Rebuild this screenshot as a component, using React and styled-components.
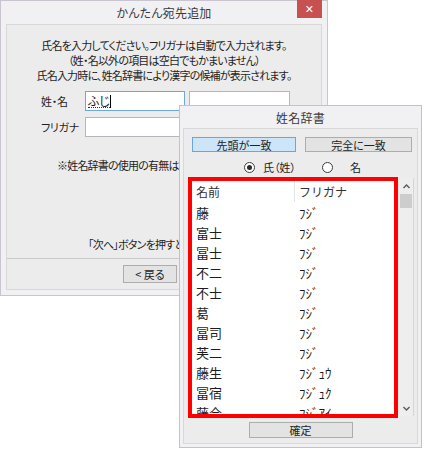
import React from "react";
import styled, { createGlobalStyle } from "styled-components";

const GlobalStyle = createGlobalStyle`
  html, body {
    margin: 0;
    padding: 0;
    background: #ffffff;
  }
  body {
    font-family: "Noto Sans CJK JP", "Noto Sans", sans-serif;
    font-feature-settings: "palt";
    color: #1e1e1e;
  }
`;

const Desktop = styled.div`
  position: relative;
  width: 425px;
  height: 451px;
  overflow: hidden;
  background: #ffffff;
`;

const Window = styled.div`
  position: absolute;
  left: ${(p) => p.$x}px;
  top: ${(p) => p.$y}px;
  width: ${(p) => p.$w}px;
  height: ${(p) => p.$h}px;
  box-sizing: border-box;
  display: flex;
  flex-direction: column;
  padding: 0 ${(p) => p.$pad}px ${(p) => p.$pad}px;
  background: #f1f0f3;
  border: 1px solid ${(p) => p.$border || "#c9c4cf"};
`;

const TitleBar = styled.div`
  position: relative;
  height: ${(p) => p.$h}px;
  flex-shrink: 0;
  display: flex;
  align-items: center;
  justify-content: center;
  font-size: 12px;
  color: #3a3a3a;
  letter-spacing: 0.2px;
`;

const CloseButton = styled.div`
  position: absolute;
  top: -1px;
  right: 0;
  width: 25px;
  height: 18px;
  background: #c75050;
  color: #ffffff;
  font-family: "DejaVu Sans", sans-serif;
  font-size: 11px;
  font-weight: bold;
  display: flex;
  align-items: center;
  justify-content: center;
`;

const Panel = styled.div`
  flex: 1;
  display: flex;
  flex-direction: column;
  background: #ececec;
  border: 1px solid #d8d8d8;
  font-size: 11px;
  min-height: 0;
`;

const Intro = styled.div`
  padding-top: 13px;
  text-align: center;
  line-height: 15px;
  letter-spacing: -0.8px;
`;

const FormRow = styled.div`
  display: flex;
  align-items: center;
  gap: 4px;
  padding-left: 34px;
  margin-top: ${(p) => p.$mt}px;
`;

const Label = styled.div`
  width: 40px;
  letter-spacing: -0.3px;
`;

const Field = styled.div`
  box-sizing: border-box;
  width: ${(p) => p.$w}px;
  height: 20px;
  background: #ffffff;
  border: 1px solid ${(p) => (p.$focus ? "#6fa7e0" : "#b4b6bc")};
  display: flex;
  align-items: center;
  padding-left: 2px;
  font-size: 12px;
`;

const Composing = styled.span`
  border-bottom: 1px dotted #333;
  line-height: 13px;
`;

const Caret = styled.span`
  display: inline-block;
  width: 1px;
  height: 13px;
  background: #000;
`;

const Note = styled.div`
  margin-top: ${(p) => p.$mt}px;
  padding-left: ${(p) => p.$pl}px;
  line-height: 15px;
  white-space: nowrap;
  letter-spacing: -0.8px;
`;

const Spacer = styled.div`
  flex: 1;
`;

const Footer = styled.div`
  border-top: 1px solid #c9c9c9;
  padding: 6px 0 6px 116px;
  margin-top: 6px;
`;

const Button = styled.div`
  box-sizing: border-box;
  width: ${(p) => p.$w}px;
  height: ${(p) => p.$h}px;
  display: flex;
  align-items: center;
  justify-content: center;
  font-size: 11px;
  color: #222;
  background: ${(p) => (p.$pressed ? "#cde5f8" : "#e3e3e3")};
  border: 1px solid ${(p) => (p.$pressed ? "#6aa6dd" : "#adadad")};
`;

const DictPanel = styled(Panel)`
  padding: 8px 0 7px 4px;
  align-items: stretch;
`;

const ButtonRow = styled.div`
  display: flex;
  gap: 9px;
  padding-left: 4px;
`;

const RadioRow = styled.div`
  display: flex;
  align-items: center;
  height: 16px;
  margin-top: 7px;
  padding-left: 56px;
  font-size: 11px;
`;

const Radio = styled.span`
  box-sizing: border-box;
  width: 11px;
  height: 11px;
  border-radius: 50%;
  border: 1px solid #3c3c3c;
  background: #fff;
  display: inline-flex;
  align-items: center;
  justify-content: center;
  margin-right: ${(p) => p.$mr}px;
  &::after {
    content: "";
    width: 5px;
    height: 5px;
    border-radius: 50%;
    background: ${(p) => (p.$on ? "#2a2a2a" : "transparent")};
  }
`;

const RadioText = styled.span`
  margin-right: ${(p) => p.$mr || 0}px;
`;

const ListArea = styled.div`
  display: flex;
  margin-top: 2px;
  height: 241px;
`;

const Highlight = styled.div`
  box-sizing: border-box;
  width: 210px;
  height: 241px;
  border: 4px solid #ff0000;
  background: #ffffff;
  overflow: hidden;
`;

const ListRow = styled.div`
  display: flex;
  height: ${(p) => (p.$head ? 21 : 20)}px;
  align-items: center;
  font-size: ${(p) => (p.$head ? 12 : 13)}px;
  color: ${(p) => (p.$head ? "#333" : "#1c1c1c")};
`;

const NameCell = styled.div`
  width: 103px;
  box-sizing: border-box;
  padding-left: 4px;
  align-self: stretch;
  display: flex;
  align-items: center;
  border-right: 1px solid ${(p) => (p.$head ? "#e3e3e3" : "transparent")};
`;

const KanaCell = styled.div`
  padding-left: 4px;
  font-size: ${(p) => (p.$head ? 12 : 13)}px;
  font-feature-settings: normal;
`;

const ScrollBar = styled.div`
  box-sizing: border-box;
  width: 15px;
  margin: 1px 0 2px 1px;
  background: #eeeeee;
  border-right: 1px solid #d6d6d6;
  display: flex;
  flex-direction: column;
  align-items: center;
`;

const Arrow = styled.div`
  height: 16px;
  width: 100%;
  display: flex;
  align-items: center;
  justify-content: center;
  color: #5a5a5a;
`;

const Thumb = styled.div`
  width: 12px;
  height: 14px;
  background: #cdcdcd;
`;

const ConfirmRow = styled.div`
  display: flex;
  justify-content: center;
  margin-top: 4px;
  padding-right: 4px;
`;

const Chevron = ({ up }) => (
  <svg width="7" height="5" viewBox="0 0 7 5">
    <path
      d={up ? "M0.5 4 L3.5 1 L6.5 4" : "M0.5 1 L3.5 4 L6.5 1"}
      fill="none"
      stroke="currentColor"
      strokeWidth="1.4"
    />
  </svg>
);

const entries = [
  ["藤", "ﾌｼﾞ"],
  ["富士", "ﾌｼﾞ"],
  ["冨士", "ﾌｼﾞ"],
  ["不二", "ﾌｼﾞ"],
  ["不士", "ﾌｼﾞ"],
  ["葛", "ﾌｼﾞ"],
  ["冨司", "ﾌｼﾞ"],
  ["芙二", "ﾌｼﾞ"],
  ["藤生", "ﾌｼﾞｭｳ"],
  ["冨宿", "ﾌｼﾞｭｸ"],
  ["藤合", "ﾌｼﾞｱｲ"],
];

export default function App() {
  return (
    <Desktop>
      <GlobalStyle />
      <Window $x={0} $y={0} $w={328} $h={296} $pad={5}>
        <TitleBar $h={23}>
          かんたん宛先追加
          <CloseButton>✕</CloseButton>
        </TitleBar>
        <Panel>
          <Intro>
            氏名を入力してください。フリガナは自動で入力されます。
            <br />
            （姓・名以外の項目は空白でもかまいません）
            <br />
            氏名入力時に、姓名辞書により漢字の候補が表示されます。
          </Intro>
          <FormRow $mt={8}>
            <Label>姓・名</Label>
            <Field $w={100} $focus>
              <Composing>ふじ</Composing>
              <Caret />
            </Field>
            <Field $w={101} />
          </FormRow>
          <FormRow $mt={6}>
            <Label>フリガナ</Label>
            <Field $w={100} />
          </FormRow>
          <Note $mt={21} $pl={50}>
            ※姓名辞書の使用の有無は設定で変更できます。
          </Note>
          <Spacer />
          <Note $mt={0} $pl={81}>
            「次へ」ボタンを押すと登録内容の確認画面が表示されます。
          </Note>
          <Footer>
            <Button $w={54} $h={18}>&lt; 戻る</Button>
          </Footer>
        </Panel>
      </Window>

      <Window $x={179} $y={105} $w={243} $h={343} $pad={3} $border="#c3c3c3">
        <TitleBar $h={22}>姓名辞書</TitleBar>
        <DictPanel>
          <ButtonRow>
            <Button $w={104} $h={15} $pressed>
              先頭が一致
            </Button>
            <Button $w={107} $h={15}>
              完全に一致
            </Button>
          </ButtonRow>
          <RadioRow>
            <Radio $on $mr={8} />
            <RadioText $mr={26}>氏（姓）</RadioText>
            <Radio $mr={17} />
            <RadioText>名</RadioText>
          </RadioRow>
          <ListArea>
            <Highlight>
              <ListRow $head>
                <NameCell $head>名前</NameCell>
                <KanaCell $head>フリガナ</KanaCell>
              </ListRow>
              {entries.map(([name, kana], i) => (
                <ListRow key={i}>
                  <NameCell>{name}</NameCell>
                  <KanaCell>{kana}</KanaCell>
                </ListRow>
              ))}
            </Highlight>
            <ScrollBar>
              <Arrow>
                <Chevron up />
              </Arrow>
              <Thumb />
              <Spacer />
              <Arrow>
                <Chevron />
              </Arrow>
            </ScrollBar>
          </ListArea>
          <ConfirmRow>
            <Button $w={104} $h={16}>
              確定
            </Button>
          </ConfirmRow>
        </DictPanel>
      </Window>
    </Desktop>
  );
}
